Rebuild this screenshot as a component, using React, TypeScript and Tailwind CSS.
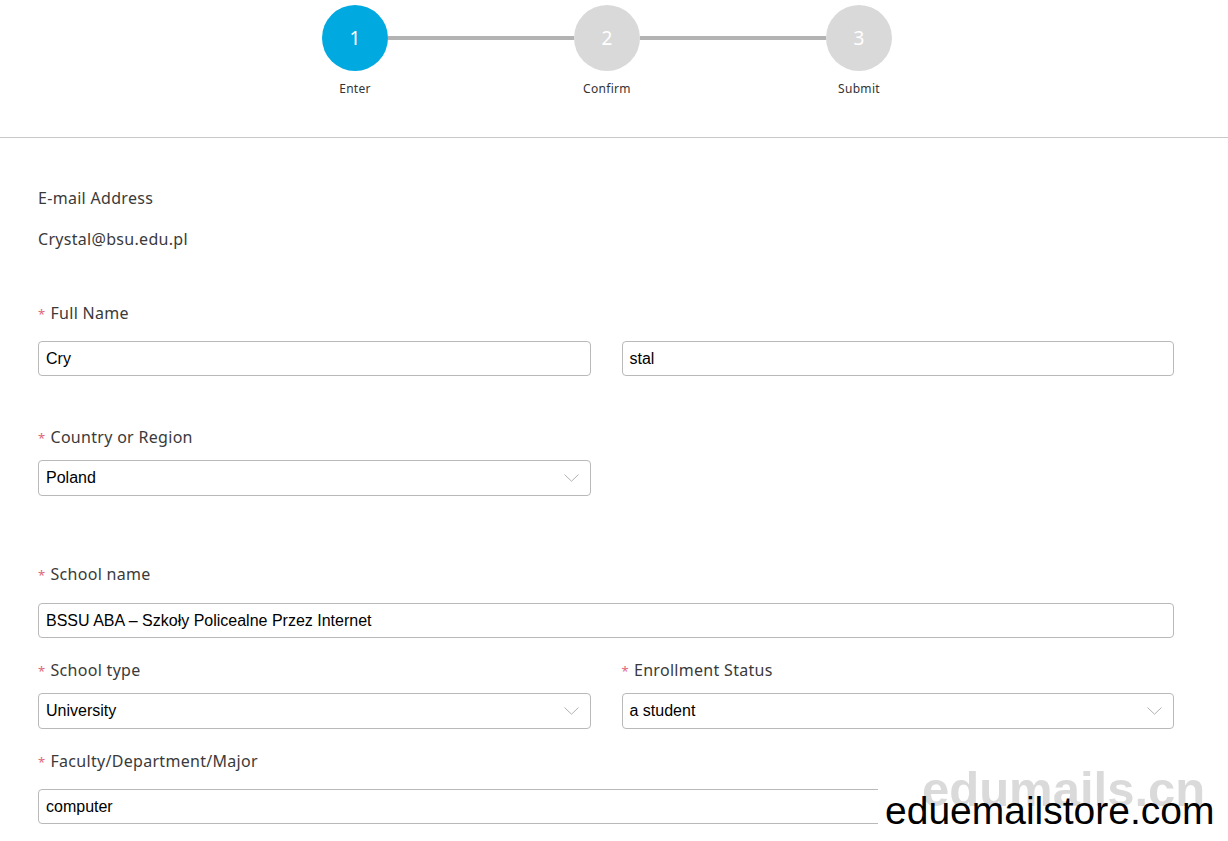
import { ReactNode } from "react";

const STEPS = [
  { n: "1", label: "Enter", active: true },
  { n: "2", label: "Confirm", active: false },
  { n: "3", label: "Submit", active: false },
];

const labelFont = { fontFamily: '"Noto Sans", Roboto, sans-serif' };
const inputFont = { fontFamily: '"Liberation Sans", Arial, sans-serif' };

function Chevron() {
  return (
    <svg width="15" height="8" viewBox="0 0 15 8" fill="none" className="shrink-0">
      <path d="M0.5 0.5 L7.5 7.2 L14.5 0.5" stroke="#b0b0b0" strokeWidth="1" />
    </svg>
  );
}

function Label({ children, required, className = "" }: { children: ReactNode; required?: boolean; className?: string }) {
  return (
    <div className={`h-6 text-[16px] leading-6 text-[#3a3a3a] tracking-[0.3px] ${className}`} style={labelFont}>
      {required && <span className="mr-[5px] text-[13px] text-[#e0677a]">*</span>}
      {children}
    </div>
  );
}

function Field({ value, select, className = "" }: { value: string; select?: boolean; className?: string }) {
  return (
    <div
      className={`flex h-[35px] items-center justify-between rounded-[4px] border border-[#b9b9b9] bg-white pl-[7px] pr-[11px] text-[16px] text-black ${className}`}
      style={inputFont}
    >
      <span>{value}</span>
      {select && <Chevron />}
    </div>
  );
}

export default function App() {
  return (
    <div className="relative min-h-[841px] w-full overflow-hidden bg-white">
      {/* stepper */}
      <div className="h-[138px] border-b border-[#c8c8c8]">
        <div className="ml-[322px] flex w-[570px] items-start pt-[5px]">
          {STEPS.map((s, i) => (
            <div key={s.n} className="contents">
              <div className="flex w-[66px] flex-col items-center">
                <div
                  className={`flex h-[66px] w-[66px] items-center justify-center rounded-full text-[19px] text-white ${
                    s.active ? "bg-[#00a9e0]" : "bg-[#d9d9d9]"
                  }`}
                  style={labelFont}
                >
                  {s.n}
                </div>
                <div className="mt-[10px] whitespace-nowrap text-[12px] leading-[16px] tracking-[0.3px] text-[#333]" style={labelFont}>
                  {s.label}
                </div>
              </div>
              {i < STEPS.length - 1 && <div className="mt-[31px] h-[4px] flex-1 bg-[#b3b3b3]" />}
            </div>
          ))}
        </div>
      </div>

      {/* form */}
      <div className="pl-[38px] pr-[54px]">
        <Label className="mt-[48px]">E-mail Address</Label>
        <Label className="mt-[17px]">Crystal@bsu.edu.pl</Label>

        <Label required className="mt-[50px]">Full Name</Label>
        <div className="mt-[16px] grid grid-cols-2 gap-[31px]">
          <Field value="Cry" />
          <Field value="stal" />
        </div>

        <Label required className="mt-[49px]">Country or Region</Label>
        <div className="mt-[11px] grid grid-cols-2 gap-[31px]">
          <Field value="Poland" select className="h-[36px]" />
        </div>

        <Label required className="mt-[66px]">School name</Label>
        <Field value="BSSU ABA – Szkoły Policealne Przez Internet" className="mt-[17px]" />

        <div className="mt-[20px] grid grid-cols-2 gap-[31px]">
          <div>
            <Label required>School type</Label>
            <Field value="University" select className="mt-[11px] h-[36px]" />
          </div>
          <div>
            <Label required>Enrollment Status</Label>
            <Field value="a student" select className="mt-[11px] h-[36px]" />
          </div>
        </div>

        <Label required className="mt-[20px]">Faculty/Department/Major</Label>
        <Field value="computer" className="mt-[16px]" />
      </div>

      {/* watermark overlay */}
      <div className="absolute left-[878px] top-[776px] h-[65px] w-[350px] bg-white" style={inputFont}>
        <div className="absolute left-[44px] top-[-17px] text-[49px] font-bold leading-[60px] text-[#dadada]">edumails.cn</div>
        <div className="absolute left-[7px] top-[13px] text-[39px] leading-[44px] text-black">eduemailstore.com</div>
      </div>
    </div>
  );
}
